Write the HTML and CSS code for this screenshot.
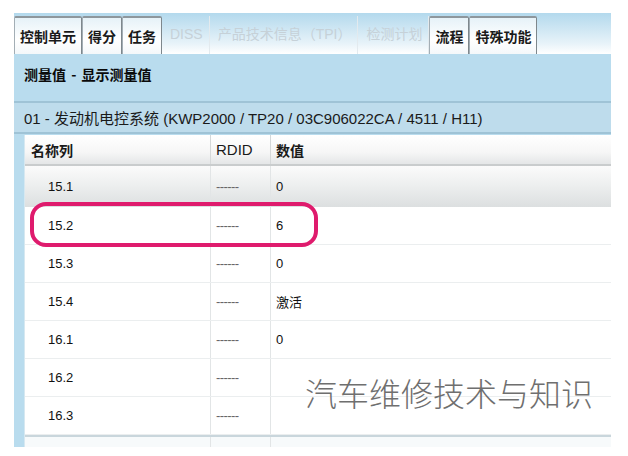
FILE: index.html
```html
<!DOCTYPE html>
<html>
<head>
    <title>测量值</title>
    <link rel="stylesheet" href="styles.css">
</head>
<body>
    <div class="page">
        <div class="window">
            <div class="tabs">
                <div class="tab active">控制单元</div>
                <div class="tab active">得分</div>
                <div class="tab active">任务</div>
                <div class="tab disabled">DISS</div>
                <div class="tab disabled">产品技术信息（TPI）</div>
                <div class="tab disabled">检测计划</div>
                <div class="tab active">流程</div>
                <div class="tab active">特殊功能</div>
                <div class="tab-fill"></div>
            </div>

            <div class="panel-title">测量值 - 显示测量值</div>
            <div class="module-line">01 - 发动机电控系统 (KWP2000 / TP20 / 03C906022CA / 4511 / H11)</div>

            <div class="table-area">
                <div class="side-strip"></div>
                <div class="table">
                    <div class="row head">
                        <div class="cell name">名称列</div>
                        <div class="cell rdid">RDID</div>
                        <div class="cell value">数值</div>
                    </div>
                    <div class="row selected">
                        <div class="cell name">15.1</div>
                        <div class="cell rdid">------</div>
                        <div class="cell value">0</div>
                    </div>
                    <div class="row">
                        <div class="cell name">15.2</div>
                        <div class="cell rdid">------</div>
                        <div class="cell value">6</div>
                    </div>
                    <div class="row">
                        <div class="cell name">15.3</div>
                        <div class="cell rdid">------</div>
                        <div class="cell value">0</div>
                    </div>
                    <div class="row">
                        <div class="cell name">15.4</div>
                        <div class="cell rdid">------</div>
                        <div class="cell value">激活</div>
                    </div>
                    <div class="row">
                        <div class="cell name">16.1</div>
                        <div class="cell rdid">------</div>
                        <div class="cell value">0</div>
                    </div>
                    <div class="row">
                        <div class="cell name">16.2</div>
                        <div class="cell rdid">------</div>
                        <div class="cell value"></div>
                    </div>
                    <div class="row">
                        <div class="cell name">16.3</div>
                        <div class="cell rdid">------</div>
                        <div class="cell value"></div>
                    </div>
                    <div class="row last">
                        <div class="cell name"></div>
                        <div class="cell rdid"></div>
                        <div class="cell value"></div>
                    </div>
                </div>
            </div>
        </div>

        <!-- highlight ring and watermark sit over the table -->
        <div class="highlight"></div>
        <div class="watermark">汽车维修技术与知识</div>
    </div>
</body>
</html>
```

FILE: styles.css
```css
body {
    margin: 0;
    background-color: white;
    font-family: "Liberation Sans", "Noto Sans CJK SC", sans-serif;
    font-size: 13px;
    color: #111;
}

.page {
    position: relative;
    width: 628px;
    height: 456px;
    overflow: hidden;
}

.window {
    margin: 13px 0 0 14px;
    width: 597px;
    height: 434px;
    background-color: #b9dcee;
    display: flex;
    flex-direction: column;
    overflow: hidden;
}

/* Tab bar */
.tabs {
    flex-shrink: 0;
    display: flex;
    align-items: flex-end;
    height: 41px;
    background: linear-gradient(#b3d9ed, #e8f3f9 75%, #ffffff);
}

.tab {
    height: 38px;
    line-height: 37px;
    padding: 0 5px;
    font-family: "Noto Sans CJK SC", sans-serif;
    font-size: 14px;
    font-weight: bold;
    box-sizing: border-box;
    white-space: nowrap;
}

.tab.active {
    background: linear-gradient(#e6f2f8, #ffffff 60%, #f4f8fa);
    border-top: 2px solid #8e979d;
    border-left: 1px solid #a3aeb5;
    border-right: 1px solid #7e878c;
    border-radius: 2px 2px 0 0;
    color: #1a1a1a;
}

.tab.disabled {
    font-family: "Liberation Sans", "Noto Sans CJK SC", sans-serif;
    font-weight: normal;
    color: #c6d1d8;
    border-right: 1px solid #e3eaee;
    padding: 0 6px 0 8px;
}

.tab-fill {
    flex: 1;
}

/* Panel headings */
.panel-title {
    flex-shrink: 0;
    height: 47px;
    line-height: 40px;
    padding-left: 10px;
    font-family: "Noto Sans CJK SC", sans-serif;
    font-weight: bold;
    font-size: 14px;
    word-spacing: 2px;
    color: #0a0a0a;
    border-bottom: 2px solid #9fc3d6;
}

.module-line {
    flex-shrink: 0;
    height: 29px;
    line-height: 31px;
    padding-left: 10px;
    font-family: "Liberation Sans", "Noto Sans CJK SC", sans-serif;
    font-size: 15px;
    color: #1a1a1a;
    background-color: #bedcec;
    border-bottom: 2px solid #9fc3d6;
}

/* Table */
.table-area {
    flex: 1;
    min-height: 0;
    display: flex;
    margin-top: 1px;
}

.side-strip {
    width: 10px;
    background-color: #b9dcee;
    border-right: 1px solid #d6e8f1;
}

.table {
    flex: 1;
    background-color: white;
}

.row {
    display: grid;
    grid-template-columns: 185px 60px 1fr;
    height: 38px;
    align-items: center;
    border-bottom: 1px solid #ebeeef;
    box-sizing: border-box;
}

.row.head {
    height: 31px;
    background: linear-gradient(#ffffff, #f6f6f6 60%, #e4e6e7);
    border-bottom: 2px solid #c9cccd;
}

.row.selected {
    height: 41px;
    background: linear-gradient(#fbfbfb, #eceeee 50%, #dcdfe0);
    border-bottom: none;
}

.row.last {
    border-bottom: none;
    border-top: 2px solid #c9d6dc;
    background-color: #f7fafb;
}

.cell {
    height: 100%;
    display: flex;
    align-items: center;
    padding-left: 5px;
    box-sizing: border-box;
}

.cell.name {
    padding-left: 23px;
}

.cell.rdid,
.cell.value {
    border-left: 1px solid #e2e5e6;
}

.cell.rdid {
    color: #666;
    font-size: 13px;
    letter-spacing: -0.6px;
}

.row.head .cell {
    font-family: "Noto Sans CJK SC", sans-serif;
    font-weight: bold;
    font-size: 14px;
    color: #1a1a1a;
}

.row.head .cell.name {
    padding-left: 6px;
}

.row.head .cell.rdid {
    font-family: "Liberation Sans", sans-serif;
    font-weight: normal;
    font-size: 15px;
    letter-spacing: 0;
    color: #1a1a1a;
}

.row.head .cell.rdid,
.row.head .cell.value {
    border-left-color: #d5d8d9;
}

/* Overlays */
.highlight {
    position: absolute;
    left: 30px;
    top: 202px;
    width: 288px;
    height: 45px;
    border: 4px solid #df1b6d;
    border-radius: 16px;
    box-sizing: border-box;
}

.watermark {
    position: absolute;
    left: 305px;
    top: 369px;
    font-family: "Noto Sans CJK SC", sans-serif;
    font-weight: 300;
    font-size: 32px;
    color: #6f6f6f;
    white-space: nowrap;
}
```
